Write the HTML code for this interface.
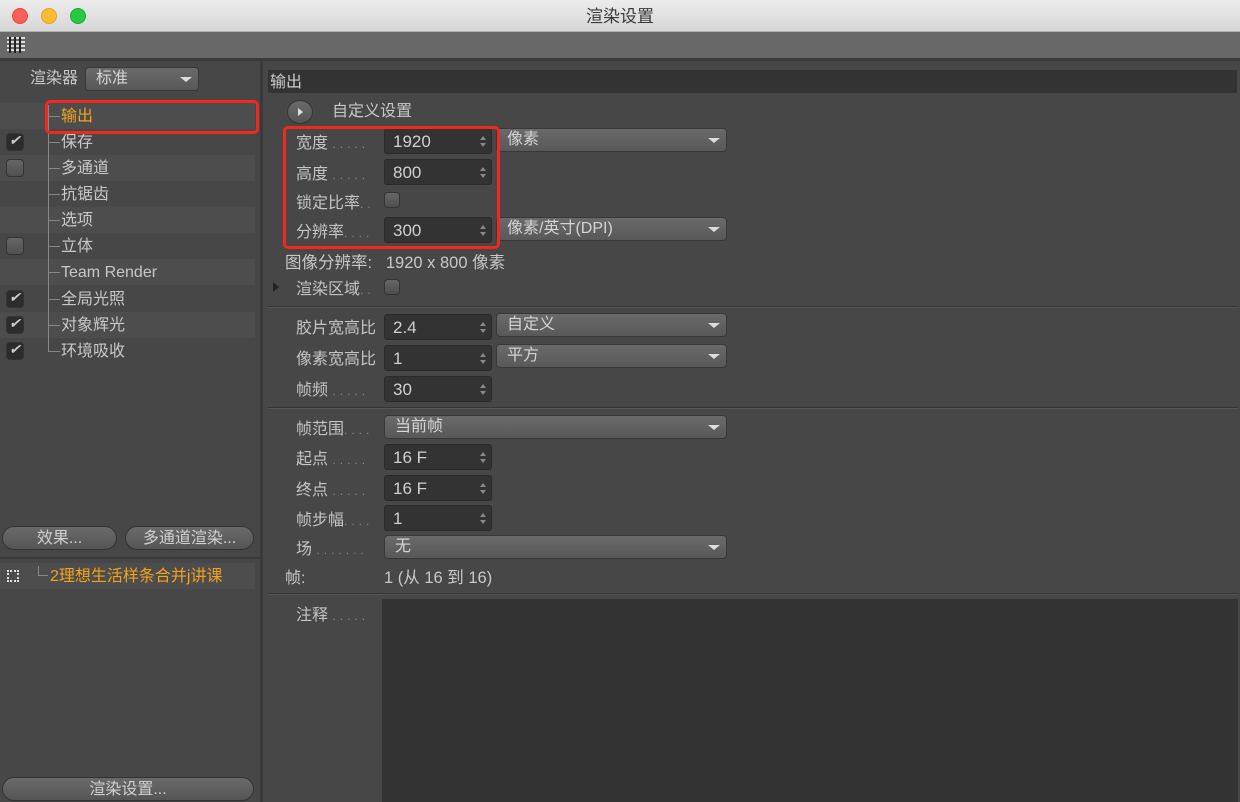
<!DOCTYPE html>
<html><head><meta charset="utf-8"><style>
*{margin:0;padding:0;box-sizing:border-box}
body{width:1240px;height:802px;overflow:hidden;background:#474747;font-family:"Liberation Sans","Noto Sans CJK SC",sans-serif;font-size:16px;color:#c8c8c8;position:relative}
.a{position:absolute;white-space:nowrap}
.title{left:0;top:0;width:1240px;height:32px;background:linear-gradient(#ececec,#d6d6d6);border-bottom:1px solid #b0b0b0;text-align:center;line-height:34px;color:#3a3a3a;font-size:17px}
.dot{position:absolute;top:8px;width:16px;height:16px;border-radius:50%}
.tb{left:0;top:32px;width:1240px;height:26px;background:#686868}
.sep{left:0;top:58px;width:1240px;height:3px;background:#3a3a3a}
.row{position:absolute;left:0;width:255px;height:26px}
.lt{background:#4d4d4d}
.lbl{position:absolute;left:61px;line-height:28px;font-size:16px;color:#c8c8c8}
.tick{position:absolute;left:48px;width:12px;height:1px;background:#888}
.cb{position:absolute;left:6px;width:18px;height:18px;border-radius:4px;background:linear-gradient(#666,#505050);border:1px solid #333}
.cbk{background:#2c2c2c}
.cbk:after{content:"✔";position:absolute;left:2px;top:-2px;color:#ccc;font-size:14px;font-style:italic}
.btn{position:absolute;height:24px;border-radius:12px;background:linear-gradient(#6a6a6a,#555);border:1px solid #333;text-align:center;line-height:24px;color:#d0d0d0;font-size:16px}
.fl{position:absolute;left:296px;color:#c4c4c4;font-size:16px;margin-top:-3px}
.dots{color:#888;font-size:12px;letter-spacing:4px}
.inp{position:absolute;left:384px;width:108px;height:26px;background:#333;border:1px solid #2a2a2a;border-radius:3px;line-height:26px;padding-left:8px;color:#d0d0d0;font-size:17px}
.inp:after{content:"";position:absolute;right:5px;top:7px;border:3px solid transparent;border-bottom:4px solid #888;border-top:none;width:0}
.inp:before{content:"";position:absolute;right:5px;top:14px;border:3px solid transparent;border-top:4px solid #888;border-bottom:none;width:0}
.dd{position:absolute;height:24px;border-radius:4px;background:linear-gradient(#6a6a6a,#585858);border:1px solid #383838;line-height:22px;padding-left:10px;color:#d4d4d4;font-size:16px}
.dd:after{content:"";position:absolute;right:6px;top:9px;border-left:6px solid transparent;border-right:6px solid transparent;border-top:5px solid #ddd}
.smcb{position:absolute;left:384px;width:16px;height:16px;border-radius:4px;background:linear-gradient(#666,#4e4e4e);border:1px solid #333}
.hr{position:absolute;left:268px;width:970px;height:2px;background:#353535;border-bottom:1px solid #555}
</style></head><body>
<div class="a title">渲染设置
<div class="dot" style="left:12px;background:#fc5f57;border:1px solid #df4744"></div>
<div class="dot" style="left:41px;background:#fdbc2e;border:1px solid #dea236"></div>
<div class="dot" style="left:70px;background:#28c840;border:1px solid #1aab29"></div>
</div>
<div class="a tb"><svg style="position:absolute;left:7px;top:5px" width="18" height="16"><g fill="#ddd"><rect x="0" y="0" width="18" height="2"/><rect x="0" y="4" width="18" height="2"/><rect x="0" y="8" width="18" height="2"/><rect x="0" y="12" width="18" height="2"/></g><g fill="#222"><rect x="2" y="0" width="2" height="16"/><rect x="7" y="0" width="2" height="16"/><rect x="12" y="0" width="2" height="16"/></g></svg></div>
<div class="a sep"></div>
<div class="a" style="left:260px;top:61px;width:3px;height:741px;background:#3a3a3a"></div>

<div class="a" style="left:30px;top:68px;line-height:22px">渲染器</div>
<div class="dd" style="left:85px;top:67px;width:114px">标准</div>

<div class="row lt" style="top:103px"></div>
<div class="row" style="top:129px"></div>
<div class="row lt" style="top:155px"></div>
<div class="row" style="top:181px"></div>
<div class="row lt" style="top:207px"></div>
<div class="row" style="top:233px"></div>
<div class="row lt" style="top:259px"></div>
<div class="row" style="top:286px"></div>
<div class="row lt" style="top:312px"></div>
<div class="row" style="top:338px"></div>
<div class="a" style="left:48px;top:105px;width:1px;height:246px;background:#888"></div>
<div class="tick" style="top:116px"></div><div class="lbl" style="top:103px;color:#f3a21c">输出</div>
<div class="tick" style="top:142px"></div><div class="lbl" style="top:129px">保存</div>
<div class="tick" style="top:168px"></div><div class="lbl" style="top:155px">多通道</div>
<div class="tick" style="top:194px"></div><div class="lbl" style="top:181px">抗锯齿</div>
<div class="tick" style="top:220px"></div><div class="lbl" style="top:207px">选项</div>
<div class="tick" style="top:246px"></div><div class="lbl" style="top:233px">立体</div>
<div class="tick" style="top:272px"></div><div class="lbl" style="top:259px">Team Render</div>
<div class="tick" style="top:299px"></div><div class="lbl" style="top:286px">全局光照</div>
<div class="tick" style="top:325px"></div><div class="lbl" style="top:312px">对象辉光</div>
<div class="tick" style="top:351px"></div><div class="lbl" style="top:338px">环境吸收</div>
<div class="cb cbk" style="top:133px"></div>
<div class="cb" style="top:159px"></div>
<div class="cb" style="top:237px"></div>
<div class="cb cbk" style="top:290px"></div>
<div class="cb cbk" style="top:316px"></div>
<div class="cb cbk" style="top:342px"></div>
<div class="a" style="left:45px;top:100px;width:214px;height:34px;border:3px solid #f0281e;border-radius:5px"></div>

<div class="btn" style="left:2px;top:526px;width:115px">效果...</div>
<div class="btn" style="left:125px;top:526px;width:129px">多通道渲染...</div>
<div class="a" style="left:0;top:557px;width:260px;height:2px;background:#3a3a3a"></div>
<div class="row lt" style="top:563px"></div>
<div class="a" style="left:7px;top:570px;width:12px;height:12px;border:2px dotted #ddd"></div>
<div class="a" style="left:38px;top:566px;width:10px;height:10px;border-left:1px solid #888;border-bottom:1px solid #888"></div>
<div class="a" style="left:50px;top:566px;color:#f3a21c;line-height:22px">2理想生活样条合并j讲课</div>
<div class="btn" style="left:2px;top:777px;width:252px">渲染设置...</div>

<div class="a" style="left:268px;top:70px;width:969px;height:23px;background:#333;line-height:25px;padding-left:2px;font-size:16px;color:#ccc">输出</div>
<div class="a" style="left:287px;top:100px;width:26px;height:24px;border-radius:50%;background:linear-gradient(#6a6a6a,#555);border:1px solid #333"></div>
<div class="a" style="left:298px;top:108px;border-top:4px solid transparent;border-bottom:4px solid transparent;border-left:5px solid #ddd"></div>
<div class="a" style="left:332px;top:102px;line-height:20px">自定义设置</div>

<div class="fl" style="top:132px">宽度 <span class="dots">.....</span></div>
<div class="inp" style="top:128px">1920</div>
<div class="dd" style="left:496px;top:128px;width:231px">像素</div>
<div class="fl" style="top:163px">高度 <span class="dots">.....</span></div>
<div class="inp" style="top:159px">800</div>
<div class="fl" style="top:192px">锁定比率<span class="dots">..</span></div>
<div class="smcb" style="top:192px"></div>
<div class="fl" style="top:221px">分辨率<span class="dots">....</span></div>
<div class="inp" style="top:217px">300</div>
<div class="dd" style="left:496px;top:217px;width:231px">像素/英寸(DPI)</div>
<div class="a" style="left:283px;top:126px;width:217px;height:123px;border:3px solid #f0281e;border-radius:5px"></div>
<div class="a" style="left:285px;top:249px;font-size:16.5px">图像分辨率:&nbsp;&nbsp; 1920 x 800 像素</div>
<div class="a" style="left:273px;top:282px;border-top:5px solid transparent;border-bottom:5px solid transparent;border-left:6px solid #222"></div>
<div class="fl" style="top:278px">渲染区域<span class="dots">..</span></div>
<div class="smcb" style="top:279px"></div>
<div class="hr" style="top:306px"></div>

<div class="fl" style="top:317px">胶片宽高比</div>
<div class="inp" style="top:314px">2.4</div>
<div class="dd" style="left:496px;top:313px;width:231px">自定义</div>
<div class="fl" style="top:348px">像素宽高比</div>
<div class="inp" style="top:345px">1</div>
<div class="dd" style="left:496px;top:344px;width:231px">平方</div>
<div class="fl" style="top:379px">帧频 <span class="dots">.....</span></div>
<div class="inp" style="top:376px">30</div>
<div class="hr" style="top:407px"></div>

<div class="fl" style="top:418px">帧范围<span class="dots">....</span></div>
<div class="dd" style="left:384px;top:415px;width:343px">当前帧</div>
<div class="fl" style="top:448px">起点 <span class="dots">.....</span></div>
<div class="inp" style="top:444px">16 F</div>
<div class="fl" style="top:479px">终点 <span class="dots">.....</span></div>
<div class="inp" style="top:475px">16 F</div>
<div class="fl" style="top:509px">帧步幅<span class="dots">....</span></div>
<div class="inp" style="top:505px">1</div>
<div class="fl" style="top:538px">场 <span class="dots">.......</span></div>
<div class="dd" style="left:384px;top:535px;width:343px">无</div>
<div class="a" style="left:285px;top:564px">帧:</div>
<div class="a" style="left:384px;top:564px;font-size:16.5px">1 (从 16 到 16)</div>
<div class="hr" style="top:593px"></div>
<div class="fl" style="top:604px">注释 <span class="dots">.....</span></div>
<div class="a" style="left:382px;top:599px;width:856px;height:203px;background:#333"></div>
</body></html>
